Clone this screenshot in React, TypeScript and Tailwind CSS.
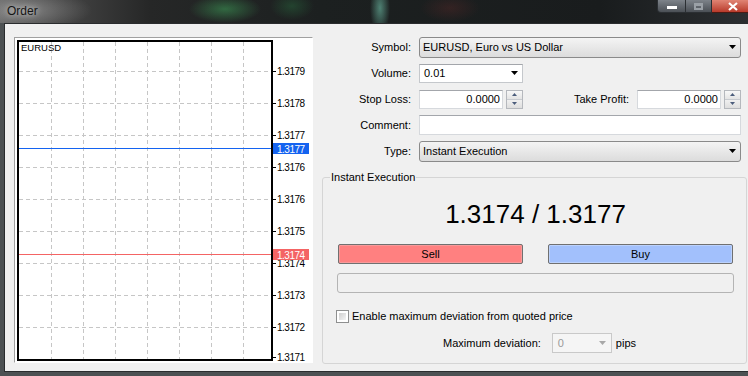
import type { ReactNode } from "react"

const labels: [string, number][] = [
  ["1.3179", 71],
  ["1.3178", 103],
  ["1.3177", 135],
  ["1.3176", 167],
  ["1.3176", 199],
  ["1.3175", 231],
  ["1.3174", 263],
  ["1.3173", 295],
  ["1.3172", 327],
  ["1.3171", 357],
]

function Arrow({ color = "#000" }: { color?: string }) {
  return (
    <svg width="7" height="4" viewBox="0 0 7 4">
      <path d="M0 0h7L3.5 4z" fill={color} />
    </svg>
  )
}

function Spinner() {
  return (
    <div className="ml-[3px] flex h-[19px] w-[17px] flex-col border border-[#b5b8bd]">
      <div className="flex flex-1 items-center justify-center border-b border-[#c8cbd0] bg-gradient-to-b from-[#f8f8f8] to-[#e4e4e4]">
        <svg width="5" height="3" viewBox="0 0 5 3">
          <path d="M0 3h5L2.5 0z" fill="#4c5d7c" />
        </svg>
      </div>
      <div className="flex flex-1 items-center justify-center bg-gradient-to-b from-[#f0f0f0] to-[#dedede]">
        <svg width="5" height="3" viewBox="0 0 5 3">
          <path d="M0 0h5L2.5 3z" fill="#4c5d7c" />
        </svg>
      </div>
    </div>
  )
}

function Row({ label, children }: { label: string; children: ReactNode }) {
  return (
    <div className="flex h-[26px] items-center">
      <div className="w-[89px] text-right">{label}</div>
      <div className="ml-[8px] flex flex-1 items-center">{children}</div>
    </div>
  )
}

function Chart() {
  return (
    <svg width="297" height="324" viewBox="0 0 297 324" fontFamily="'Liberation Sans', Arial, sans-serif">
      {[0, 1, 2, 3, 4, 5, 6].map(i => (
        <line key={"v" + i} x1={36.5 + i * 32} y1={4} x2={36.5 + i * 32} y2={321} stroke="#c6c6c6" strokeDasharray="4 3" />
      ))}
      {[0, 1, 2, 3, 4, 5, 6, 7, 8].map(i => (
        <line key={"h" + i} x1={4} y1={33.5 + i * 32} x2={256} y2={33.5 + i * 32} stroke="#c6c6c6" strokeDasharray="4 3" />
      ))}
      <rect x="3" y="3" width="254" height="319" fill="none" stroke="#000" strokeWidth="2" />
      <text x="6" y="13" fontSize="9.5" fill="#000">EURUSD</text>
      {labels.map(([v, y], i) => (
        <g key={i}>
          <line x1="258" y1={y - 38 + 0.5} x2="261" y2={y - 38 + 0.5} stroke="#000" />
          <text x="262" y={y - 38 + 4} fontSize="10" letterSpacing="-0.5" fill="#000">{v}</text>
        </g>
      ))}
      <line x1="4" y1="110.5" x2="256" y2="110.5" stroke="#1463f0" />
      <rect x="258" y="105" width="36" height="11" fill="#1463f0" />
      <text x="262" y="114.5" fontSize="10" letterSpacing="-0.5" fill="#fff">1.3177</text>
      <line x1="4" y1="216.5" x2="256" y2="216.5" stroke="#f46464" />
      <rect x="258" y="211" width="36" height="11" fill="#f46464" />
      <text x="262" y="220.5" fontSize="10" letterSpacing="-0.5" fill="#fff">1.3174</text>
    </svg>
  )
}

export default function App() {
  return (
    <div className="flex h-[376px] w-[748px] flex-col overflow-hidden bg-[#1a1d1e] font-['Liberation_Sans',Arial,sans-serif] text-[11px] text-black">
      <div className="relative h-[23px] shrink-0 bg-[radial-gradient(70px_20px_at_22px_10px,rgba(190,190,190,0.45),transparent),radial-gradient(36px_14px_at_225px_9px,rgba(60,150,85,0.6),transparent),radial-gradient(22px_14px_at_292px_6px,rgba(40,100,60,0.5),transparent),radial-gradient(10px_26px_at_380px_8px,rgba(100,170,150,0.7),transparent),radial-gradient(30px_14px_at_450px_8px,rgba(90,40,40,0.4),transparent),linear-gradient(90deg,#616161_0px,#454545_60px,#262727_150px,#1c2020_320px,#191c1d_600px,#2b2e31_748px)]">
        <span className="absolute left-[7px] top-[2px] text-[12px] text-[#151515] [text-shadow:0_0_6px_rgba(255,255,255,0.8)]">Order</span>
        <div className="absolute right-0 top-0 flex h-[13px]">
          <div className="flex w-[29px] items-end justify-center rounded-bl-[4px] border border-t-0 border-[#2b2f33] bg-gradient-to-b from-[#7d838a] to-[#4b5056] pb-[3px]">
            <div className="h-[3px] w-[10px] bg-white" />
          </div>
          <div className="flex w-[26px] items-center justify-center border-b border-r border-[#2b2f33] bg-gradient-to-b from-[#7d838a] to-[#4b5056]">
            <div className="h-[7px] w-[9px] border-2 border-t-[3px] border-[#9aa0a6]" />
          </div>
          <div className="flex w-[36px] items-center justify-center border-b border-[#4a1a14] bg-gradient-to-b from-[#e08474] to-[#b8392a]">
            <svg width="10" height="9" viewBox="0 0 10 9" className="ml-[6px]">
              <path d="M1 1l8 7M9 1L1 8" stroke="#fff" strokeWidth="2.2" />
            </svg>
          </div>
        </div>
      </div>
      <div className="flex min-h-0 flex-1 bg-[#4d5153] pb-[4px] pl-[4px]">
        <div className="flex flex-1 border-b border-l border-t border-[#2a2c2e] bg-[#f0f0f0]">
          <div className="ml-[9px] mt-[13px] h-[326px] w-[299px] border border-b-white border-l-[#a0a0a0] border-r-white border-t-[#a0a0a0] bg-white">
            <Chart />
          </div>
          <div className="flex w-[435px] flex-col pl-[9px] pr-[1px]">
            <div className="mt-[10px] pr-[6px]">
              <Row label="Symbol:">
                <div className="flex h-[21px] flex-1 items-center justify-between rounded-[3px] border border-[#8a8a8a] bg-gradient-to-b from-[#f4f4f4] to-[#dcdcdc] pl-[3px] pr-[4px]">
                  <span>EURUSD, Euro vs US Dollar</span>
                  <Arrow />
                </div>
              </Row>
              <Row label="Volume:">
                <div className="flex h-[19px] w-[104px] items-center justify-between border border-[#c5c8cc] border-t-[#a3a6ab] bg-white pl-[4px] pr-[4px]">
                  <span>0.01</span>
                  <Arrow />
                </div>
              </Row>
              <Row label="Stop Loss:">
                <div className="flex h-[19px] w-[84px] items-center justify-end border border-[#d6d9dd] border-t-[#a3a6ab] bg-white pr-[2px]">0.0000</div>
                <Spinner />
                <div className="flex-1 text-right">Take Profit:</div>
                <div className="ml-[8px] flex h-[19px] w-[84px] items-center justify-end border border-[#d6d9dd] border-t-[#a3a6ab] bg-white pr-[2px]">0.0000</div>
                <Spinner />
              </Row>
              <Row label="Comment:">
                <div className="h-[20px] flex-1 border border-[#d6d9dd] border-t-[#a3a6ab] bg-white" />
              </Row>
              <Row label="Type:">
                <div className="flex h-[21px] flex-1 items-center justify-between rounded-[3px] border border-[#8a8a8a] bg-gradient-to-b from-[#f4f4f4] to-[#dcdcdc] pl-[3px] pr-[4px]">
                  <span>Instant Execution</span>
                  <Arrow />
                </div>
              </Row>
            </div>
            <fieldset className="mt-[7px] rounded-[3px] border border-[#d5d5d5] pb-[10px] pl-[15px] pr-[13px]">
              <legend className="ml-[-8px] px-[1px] leading-[12px]">Instant Execution</legend>
              <div className="mt-[16px] text-center text-[26px] leading-[30px]">1.3174 / 1.3177</div>
              <div className="mt-[15px] flex justify-between">
                <div className="flex h-[20px] w-[185px] items-center justify-center rounded-[2px] border border-[#707070] bg-[#ff8080] shadow-[inset_0_0_0_1px_#f79a9a]">Sell</div>
                <div className="flex h-[20px] w-[185px] items-center justify-center rounded-[2px] border border-[#707070] bg-[#a2c0fc] shadow-[inset_0_0_0_1px_#bcd2fc]">Buy</div>
              </div>
              <div className="ml-[-1px] mr-[-1px] mt-[9px] h-[20px] rounded-[3px] border border-[#b4b4b4] bg-[#f0f0f0]" />
              <div className="ml-[-2px] mt-[16px] flex h-[14px] items-center">
                <div className="h-[13px] w-[13px] border border-[#8e8f8f] bg-white p-[2px]">
                  <div className="h-full w-full bg-gradient-to-br from-[#cfcfcf] to-[#f4f4f4]" />
                </div>
                <span className="ml-[3px]">Enable maximum deviation from quoted price</span>
              </div>
              <div className="mt-[10px] flex h-[20px] items-center pl-[105px]">
                <span>Maximum deviation:</span>
                <div className="ml-[11px] flex h-[20px] w-[60px] items-center justify-between border border-[#c9c9c9] bg-[#f5f5f5] pl-[5px] pr-[5px] text-[#9a9a9a]">
                  <span>0</span>
                  <Arrow color="#a8a8a8" />
                </div>
                <span className="ml-[4px]">pips</span>
              </div>
            </fieldset>
          </div>
        </div>
      </div>
    </div>
  )
}
